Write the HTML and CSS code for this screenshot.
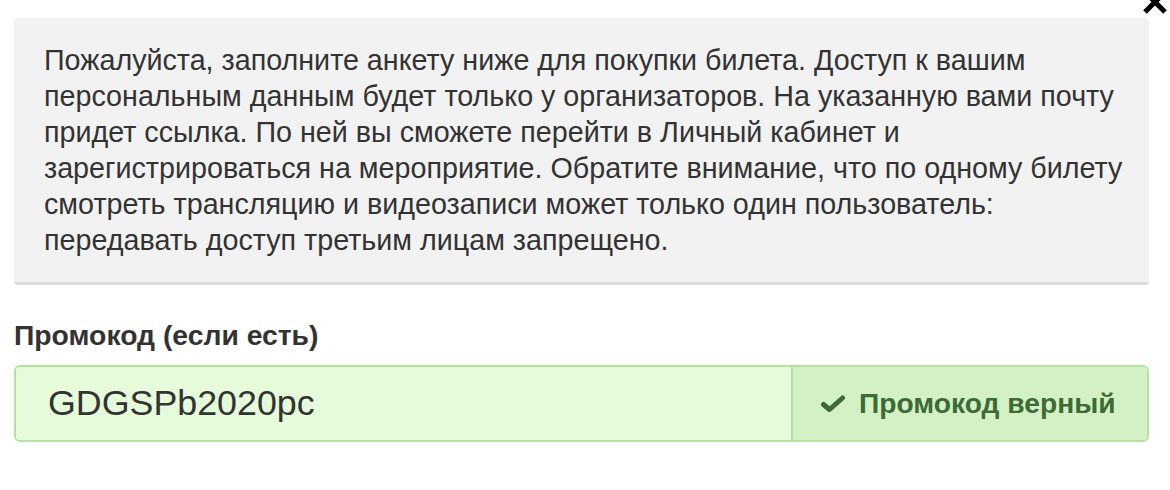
FILE: index.html
```html
<!DOCTYPE html>
<html lang="ru">

<head>
    <meta charset="UTF-8">
    <meta name="viewport" content="width=device-width, initial-scale=1.0">
    <title>Покупка билета</title>
    <link rel="stylesheet" href="styles.css">
</head>

<body>
    <div class="modal">
        <button class="close" type="button" aria-label="Закрыть">
            <svg width="28" height="28" viewBox="0 0 28 28">
                <path d="M4 4 L24 24 M24 4 L4 24" stroke="#000" stroke-width="5" fill="none" />
            </svg>
        </button>

        <div class="notice">
            Пожалуйста, заполните анкету ниже для покупки билета. Доступ к вашим
            персональным данным будет только у организаторов. На указанную вами почту
            придет ссылка. По ней вы сможете перейти в Личный кабинет и
            зарегистрироваться на мероприятие. Обратите внимание, что по одному билету
            смотреть трансляцию и видеозаписи может только один пользователь:
            передавать доступ третьим лицам запрещено.
        </div>

        <div class="form-group">
            <label class="control-label" for="promo">Промокод (если есть)</label>
            <div class="input-group">
                <input id="promo" class="form-control" type="text" value="GDGSPb2020pc">
                <span class="addon">
                    <svg class="ok" width="24" height="18" viewBox="0 0 24 18">
                        <path d="M2.5 9.5 L8.5 14.5 L21.5 3" stroke="#3c6b36" stroke-width="5" stroke-linejoin="round" stroke-linecap="round" fill="none" />
                    </svg>
                    Промокод верный
                </span>
            </div>
        </div>
    </div>
</body>

</html>
```

FILE: styles.css
```css
body {
    margin: 0;
    background-color: #fff;
    font-family: "Liberation Sans", Arial, sans-serif;
    color: #333;
}

.modal {
    padding: 18px 21px 0 14px;
    position: relative;
}

.close {
    position: absolute;
    top: -12px;
    right: 1px;
    padding: 0;
    border: 0;
    background: none;
}

.notice {
    background-color: #f2f2f2;
    border-bottom: 3px solid #dcdcdc;
    border-radius: 4px;
    padding: 24px 24px 24px 30px;
    font-size: 28.7px;
    line-height: 36px;
}

.form-group {
    margin-top: 32px;
}

.control-label {
    display: block;
    font-weight: bold;
    font-size: 28.3px;
    line-height: 36px;
    margin-bottom: 12px;
}

.input-group {
    display: flex;
    height: 77px;
    box-sizing: border-box;
    border: 2px solid #b5e2a2;
    border-radius: 6px;
    overflow: hidden;
}

.form-control {
    flex: 1;
    min-width: 0;
    border: 0;
    margin: 0;
    padding: 0 0 0 32px;
    background-color: #e6fbda;
    font-family: "Liberation Sans", Arial, sans-serif;
    font-size: 35.8px;
    color: #333;
    outline: none;
}

.addon {
    display: flex;
    align-items: center;
    gap: 14px;
    width: 356px;
    box-sizing: border-box;
    padding-left: 28px;
    border-left: 2px solid #b5e2a2;
    background-color: #d4f1c5;
    color: #3c6b36;
    font-weight: bold;
    font-size: 28.2px;
}
```
